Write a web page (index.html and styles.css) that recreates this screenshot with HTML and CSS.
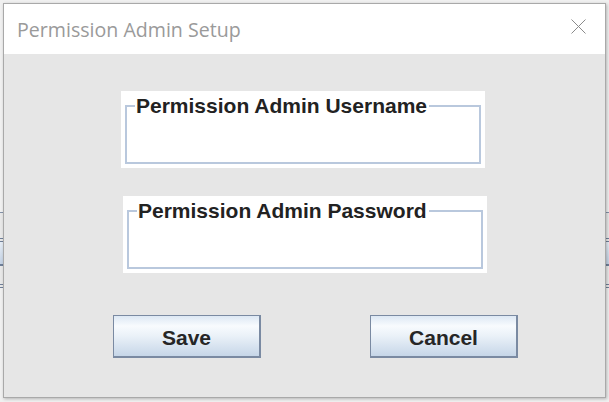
FILE: index.html
```html
<!DOCTYPE html>
<html>
<head>
<meta charset="utf-8">
<link rel="stylesheet" href="styles.css">
</head>
<body>
<div class="window">
  <div class="titlebar">
    <span class="title">Permission Admin Setup</span>
    <svg class="close" width="15" height="15" viewBox="0 0 15 15"><path d="M0.5 0.5 L14.5 14.5 M14.5 0.5 L0.5 14.5" stroke="#8a8a8a" stroke-width="1" fill="none"/></svg>
  </div>
  <div class="content">
    <div class="panel panel-user">
      <fieldset class="group"><legend>Permission Admin Username</legend></fieldset>
    </div>
    <div class="panel panel-pass">
      <fieldset class="group"><legend>Permission Admin Password</legend></fieldset>
    </div>
    <div class="buttons">
      <button class="btn">Save</button>
      <button class="btn">Cancel</button>
    </div>
  </div>
</div>
</body>
</html>
```

FILE: styles.css
```css
html, body {
  margin: 0;
  padding: 0;
}
body {
  width: 609px;
  height: 402px;
  overflow: hidden;
  background: linear-gradient(to bottom,
    #f0f0f0 0, #f0f0f0 212px, #8391a8 212px, #8391a8 213px,
    #e8e8e8 213px, #e8e8e8 238px, #6f7f98 238px, #6f7f98 239px,
    #e8e8e8 239px, #e8e8e8 241px, #6f7f98 241px, #6f7f98 242px,
    #e6edf5 242px, #c3d1e3 264px, #6f7f98 264px, #6f7f98 266px,
    #e8e8e8 266px, #e8e8e8 284px, #6f7f98 284px, #6f7f98 285px,
    #e8e8e8 285px, #e8e8e8 287px, #6f7f98 287px, #6f7f98 288px,
    #f0f0f0 288px, #f0f0f0 100%);
  padding: 3px 0 0 3px;
  box-sizing: border-box;
}
.window {
  width: 603px;
  height: 395px;
  box-sizing: border-box;
  border: 1px solid #a9a9a9;
  background: #e6e6e6;
  box-shadow: 1px 1px 3px rgba(0,0,0,0.25);
  display: flex;
  flex-direction: column;
}
.titlebar {
  height: 50px;
  background: #ffffff;
  display: flex;
  align-items: center;
  justify-content: space-between;
  padding: 0 19px 0 13px;
  flex-shrink: 0;
}
.title {
  font-family: "Open Sans", "Noto Sans", sans-serif;
  font-size: 19.6px;
  color: #9a9a9a;
  margin-top: 0;
}
.close {
  display: block;
  margin-top: -5px;
}
.content {
  flex: 1;
  display: flex;
  flex-direction: column;
  padding-top: 37px;
}
.panel {
  width: 364px;
  height: 77px;
  box-sizing: border-box;
  background: #ffffff;
  padding: 4px;
  display: flex;
}
.panel-user {
  margin-left: 117px;
}
.panel-pass {
  margin-left: 119px;
  margin-top: 28px;
}
.group {
  flex: 1;
  margin: 0;
  padding: 0;
  border: 2px solid #b9c8dd;
  min-width: 0;
}
.group legend {
  font-family: "Liberation Sans", Arial, sans-serif;
  font-weight: bold;
  font-size: 21px;
  line-height: 21px;
  color: #222222;
  padding: 0 2px 0 1px;
  margin-left: 8px;
}
.buttons {
  display: flex;
  gap: 109px;
  margin-left: 109px;
  margin-top: 42px;
}
.btn {
  width: 148px;
  height: 43px;
  box-sizing: border-box;
  border: 2px solid #7a8aa2;
  border-top-width: 1px;
  border-left-width: 1px;
  background: linear-gradient(to bottom, #dde8f4 0, #f8fbfe 25%, #eaf1f8 50%, #c6d6e8 100%);
  font-family: "Liberation Sans", Arial, sans-serif;
  font-weight: bold;
  font-size: 21px;
  color: #262626;
  padding: 3px 0 0 0;
  margin: 0;
}
```
